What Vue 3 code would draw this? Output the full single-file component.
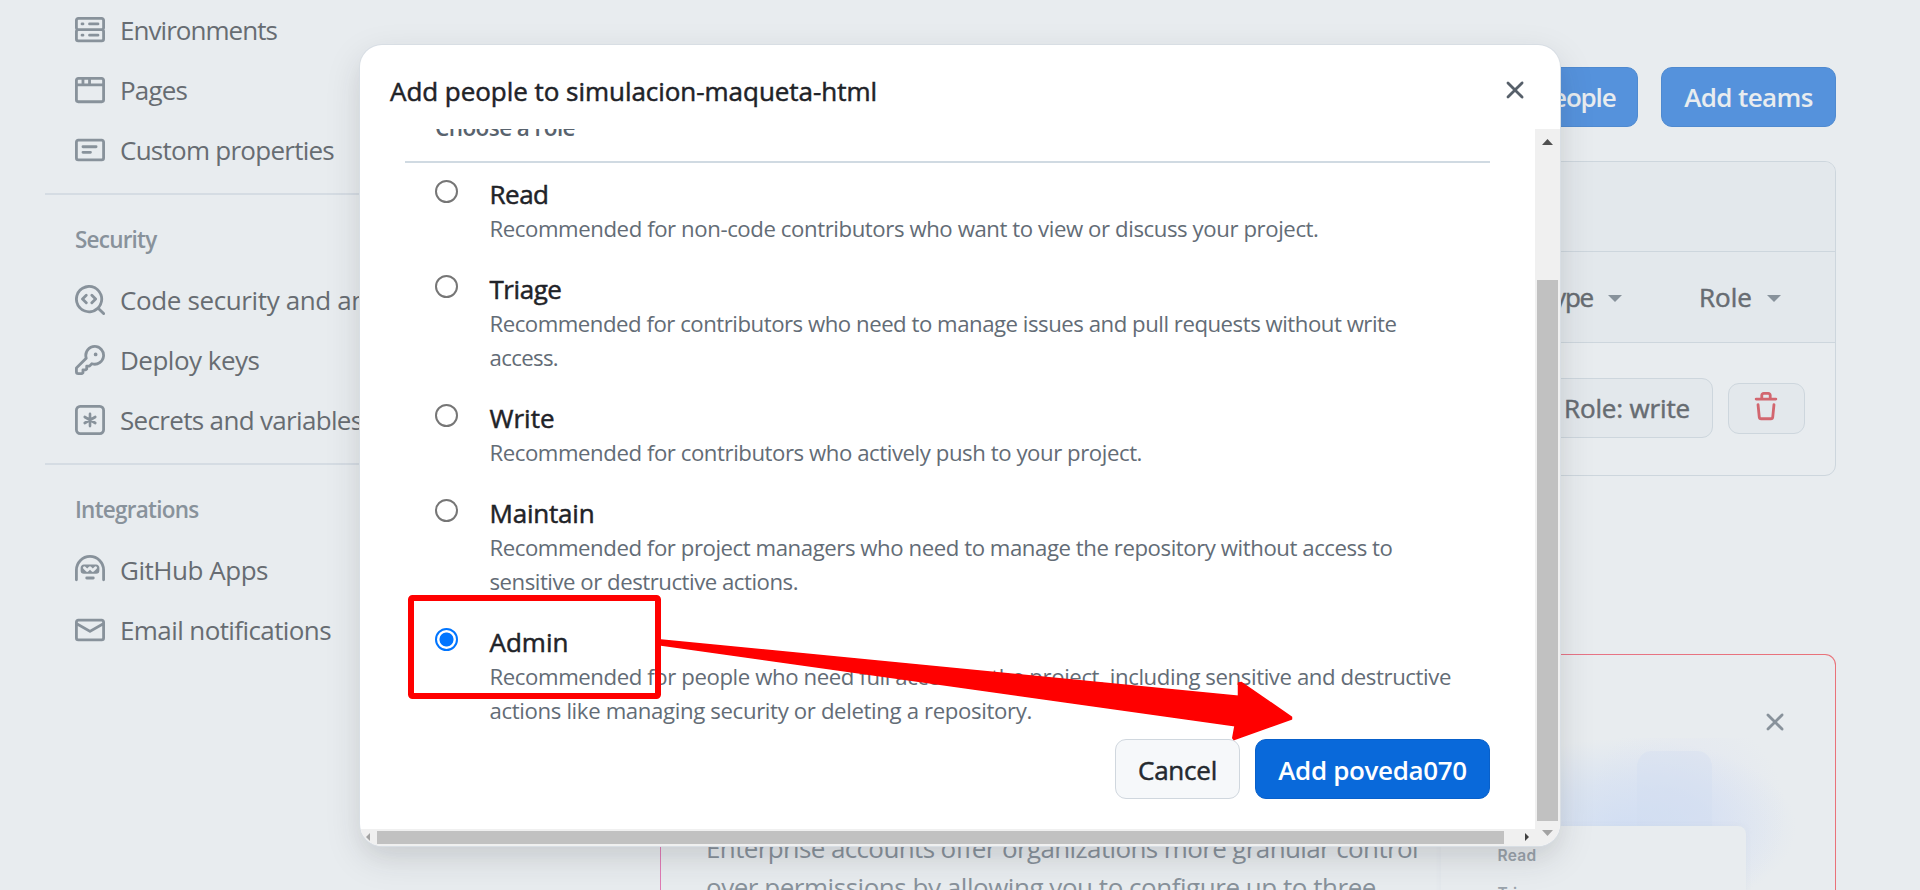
<script setup>
const icons = {
  server: 'M1.75 1h12.5c.966 0 1.75.784 1.75 1.75v4c0 .372-.116.717-.314 1 .198.283.314.628.314 1v4a1.75 1.75 0 0 1-1.75 1.75H1.75A1.75 1.75 0 0 1 0 12.75v-4c0-.358.109-.707.314-1a1.739 1.739 0 0 1-.314-1v-4C0 1.784.784 1 1.75 1ZM1.5 2.75v4c0 .138.112.25.25.25h12.5a.25.25 0 0 0 .25-.25v-4a.25.25 0 0 0-.25-.25H1.75a.25.25 0 0 0-.25.25Zm.25 5.75a.25.25 0 0 0-.25.25v4c0 .138.112.25.25.25h12.5a.25.25 0 0 0 .25-.25v-4a.25.25 0 0 0-.25-.25ZM7 4.75A.75.75 0 0 1 7.75 4h4.5a.75.75 0 0 1 0 1.5h-4.5A.75.75 0 0 1 7 4.75ZM7.75 10h4.5a.75.75 0 0 1 0 1.5h-4.5a.75.75 0 0 1 0-1.5ZM3 4.75A.75.75 0 0 1 3.75 4h.5a.75.75 0 0 1 0 1.5h-.5A.75.75 0 0 1 3 4.75ZM3.75 10h.5a.75.75 0 0 1 0 1.5h-.5a.75.75 0 0 1 0-1.5Z',
  browser: 'M0 2.75C0 1.784.784 1 1.75 1h12.5c.966 0 1.75.784 1.75 1.75v10.5A1.75 1.75 0 0 1 14.25 15H1.75A1.75 1.75 0 0 1 0 13.25ZM14.5 6h-13v7.25c0 .138.112.25.25.25h12.5a.25.25 0 0 0 .25-.25Zm-6-3.5v2h6V2.75a.25.25 0 0 0-.25-.25ZM5 2.5v2h2v-2Zm-3.25 0a.25.25 0 0 0-.25.25V4.5h2v-2Z',
  note: 'M0 3.75C0 2.784.784 2 1.75 2h12.5c.966 0 1.75.784 1.75 1.75v8.5A1.75 1.75 0 0 1 14.25 14H1.75A1.75 1.75 0 0 1 0 12.25Zm1.75-.25a.25.25 0 0 0-.25.25v8.5c0 .138.112.25.25.25h12.5a.25.25 0 0 0 .25-.25v-8.5a.25.25 0 0 0-.25-.25ZM3.5 6.25a.75.75 0 0 1 .75-.75h7a.75.75 0 0 1 0 1.5h-7a.75.75 0 0 1-.75-.75Zm.75 2.25h4a.75.75 0 0 1 0 1.5h-4a.75.75 0 0 1 0-1.5Z',
  codescan: 'M8.47 4.97a.75.75 0 0 0 0 1.06L9.94 7.5 8.47 8.97a.75.75 0 1 0 1.06 1.06l2-2a.75.75 0 0 0 0-1.06l-2-2a.75.75 0 0 0-1.06 0ZM6.53 6.03a.75.75 0 0 0-1.06-1.06l-2 2a.75.75 0 0 0 0 1.06l2 2a.75.75 0 1 0 1.06-1.06L5.06 7.5l1.47-1.47ZM12.246 13.307a7.501 7.501 0 1 1 1.06-1.06l2.474 2.473a.749.749 0 0 1-.326 1.275.749.749 0 0 1-.734-.215ZM1.5 7.5a6.002 6.002 0 0 0 3.608 5.504 6.002 6.002 0 0 0 6.486-1.117.748.748 0 0 1 .292-.293A6 6 0 1 0 1.5 7.5Z',
  key: 'M10.5 0a5.499 5.499 0 1 1-1.288 10.848l-.932.932a.749.749 0 0 1-.53.22H7v.75a.749.749 0 0 1-.22.53l-.5.5a.749.749 0 0 1-.53.22H5v.75a.749.749 0 0 1-.22.53l-.5.5a.749.749 0 0 1-.53.22h-2A1.75 1.75 0 0 1 0 14.25v-2c0-.199.079-.389.22-.53l4.932-4.932A5.5 5.5 0 0 1 10.5 0Zm-4 5.5c-.001.431.069.86.205 1.269a.75.75 0 0 1-.181.768L1.5 12.56v1.69c0 .138.112.25.25.25h1.69l.06-.06v-1.19a.75.75 0 0 1 .75-.75h1.19l.06-.06v-1.19a.75.75 0 0 1 .75-.75h1.19l1.023-1.025a.75.75 0 0 1 .768-.18A4 4 0 1 0 6.5 5.5ZM11 6a1 1 0 1 1 0-2 1 1 0 0 1 0 2Z',
  square: 'M0 2.75A2.75 2.75 0 0 1 2.75 0h10.5A2.75 2.75 0 0 1 16 2.75v10.5A2.75 2.75 0 0 1 13.25 16H2.75A2.75 2.75 0 0 1 0 13.25ZM2.75 1.5c-.69 0-1.25.56-1.25 1.25v10.5c0 .69.56 1.25 1.25 1.25h10.5c.69 0 1.25-.56 1.25-1.25V2.75c0-.69-.56-1.25-1.25-1.25Z',
  hubot: 'M0 8a8 8 0 1 1 16 0v5.25a.75.75 0 0 1-1.5 0V8a6.5 6.5 0 1 0-13 0v5.25a.75.75 0 0 1-1.5 0Zm5.5 4.25a.75.75 0 0 1 .75-.75h3.5a.75.75 0 0 1 0 1.5h-3.5a.75.75 0 0 1-.75-.75ZM3 6.75C3 5.784 3.784 5 4.75 5h6.5c.966 0 1.75.784 1.75 1.75v1.5A1.75 1.75 0 0 1 11.25 10h-6.5A1.75 1.75 0 0 1 3 8.25Zm1.47-.53a.75.75 0 0 0 0 1.06l1.5 1.5a.75.75 0 0 0 1.06 0L8 7.81l.97.97a.75.75 0 0 0 1.06 0l1.5-1.5a.75.75 0 0 0-1.06-1.06l-.97.97-.97-.97a.75.75 0 0 0-1.06 0l-.97.97-.97-.97a.75.75 0 0 0-1.06 0Z',
  mail: 'M1.75 2h12.5c.966 0 1.75.784 1.75 1.75v8.5A1.75 1.75 0 0 1 14.25 14H1.75A1.75 1.75 0 0 1 0 12.25v-8.5C0 2.784.784 2 1.75 2ZM1.5 12.251c0 .138.112.25.25.25h12.5a.25.25 0 0 0 .25-.25V5.809L8.38 9.397a.75.75 0 0 1-.76 0L1.5 5.809v6.442Zm13-8.181v-.32a.25.25 0 0 0-.25-.25H1.75a.25.25 0 0 0-.25.25v.32L8 7.88Z',
  x: 'M3.72 3.72a.75.75 0 0 1 1.06 0L8 6.94l3.22-3.22a.749.749 0 0 1 1.275.326.749.749 0 0 1-.215.734L9.06 8l3.22 3.22a.749.749 0 0 1-.326 1.275.749.749 0 0 1-.734-.215L8 9.06l-3.22 3.22a.751.751 0 0 1-1.042-.018.751.751 0 0 1-.018-1.042L6.94 8 3.72 4.78a.75.75 0 0 1 0-1.06Z',
  trash: 'M11 1.75V3h2.25a.75.75 0 0 1 0 1.5H2.75a.75.75 0 0 1 0-1.5H5V1.75C5 .784 5.784 0 6.75 0h2.5C10.216 0 11 .784 11 1.75ZM4.496 6.675l.66 6.6a.25.25 0 0 0 .249.225h5.19a.25.25 0 0 0 .249-.225l.66-6.6a.75.75 0 0 1 1.492.149l-.66 6.6A1.748 1.748 0 0 1 10.595 15h-5.19a1.75 1.75 0 0 1-1.741-1.575l-.66-6.6a.75.75 0 1 1 1.492-.15ZM6.5 1.75V3h3V1.75a.25.25 0 0 0-.25-.25h-2.5a.25.25 0 0 0-.25.25Z',
}

// w is the advance width of each label, in pixels
const groups = [
  {
    items: [
      { icon: 'server', text: 'Environments', w: 157 },
      { icon: 'browser', text: 'Pages', w: 67 },
      { icon: 'note', text: 'Custom properties', w: 214 },
    ],
  },
  {
    title: 'Security', w: 81.5,
    items: [
      { icon: 'codescan', text: 'Code security and analysis', w: 310 },
      { icon: 'key', text: 'Deploy keys', w: 139.5 },
      { icon: 'square', text: 'Secrets and variables', w: 242.5 },
    ],
  },
  {
    title: 'Integrations', w: 123.5,
    items: [
      { icon: 'hubot', text: 'GitHub Apps', w: 148 },
      { icon: 'mail', text: 'Email notifications', w: 211 },
    ],
  },
]

const roles = [
  { name: 'Read', w: 59, lines: [['Recommended for non-code contributors who want to view or discuss your project.', 829]] },
  {
    name: 'Triage', w: 72,
    lines: [['Recommended for contributors who need to manage issues and pull requests without write', 907], ['access.', 68.5]],
  },
  { name: 'Write', w: 65, lines: [['Recommended for contributors who actively push to your project.', 652.5]] },
  {
    name: 'Maintain', w: 105,
    lines: [['Recommended for project managers who need to manage the repository without access to', 903], ['sensitive or destructive actions.', 308.5]],
  },
  {
    name: 'Admin', w: 79, checked: true,
    lines: [['Recommended for people who need full access to the project, including sensitive and destructive', 961.5], ['actions like managing security or deleting a repository.', 542.5]],
  },
]

// Spreads the tracking of a label so that it takes the given width
const vFit = {
  mounted(el, { value }) {
    const natural = el.getBoundingClientRect().width
    el.style.letterSpacing = (value - natural) / el.textContent.length + 'px'
  },
}
</script>

<template>
  <div class="page">
    <nav class="sidebar">
      <section v-for="(g, i) in groups" :key="i" class="group">
        <h3 v-if="g.title" class="group-title"><span v-fit="g.w" class="t">{{ g.title }}</span></h3>
        <a v-for="it in g.items" :key="it.text" class="nav-item">
          <svg class="icon" viewBox="0 0 16 16">
            <path :d="icons[it.icon]" fill-rule="evenodd" />
            <path v-if="it.icon === 'square'" class="asterisk" d="M8 4.75v6.5M5.2 6.4l5.6 3.2M5.2 9.6l5.6-3.2" />
          </svg>
          <span v-fit="it.w" class="t">{{ it.text }}</span>
        </a>
      </section>
    </nav>

    <main class="main">
      <div class="actions">
        <button class="dim-primary"><span v-fit="130" class="t">Add people</span></button>
        <button class="dim-primary"><span v-fit="128.5" class="t">Add teams</span></button>
      </div>

      <div class="table">
        <div class="table-head"></div>
        <div class="table-cols">
          <span class="col"><span v-fit="53" class="t">Type</span><i class="caret"></i></span>
          <span class="col"><span v-fit="53" class="t">Role</span><i class="caret"></i></span>
        </div>
        <div class="table-row">
          <button class="role-btn"><span v-fit="126" class="t">Role: write</span></button>
          <button class="trash-btn"><svg class="icon" viewBox="0 0 16 16"><path :d="icons.trash" fill-rule="evenodd" /></svg></button>
        </div>
      </div>

      <div class="promo">
        <p class="promo-text">
          <span v-fit="712" class="t">Enterprise accounts offer organizations more granular control</span><br>
          <span v-fit="670" class="t">over permissions by allowing you to configure up to three</span>
        </p>
        <div class="promo-side">
          <svg class="icon promo-close" viewBox="0 0 16 16"><path :d="icons.x" /></svg>
          <div class="art">
            <div class="tile"></div>
            <div class="sheet">
              <span v-fit="39" class="t">Read</span>
              <span v-fit="47" class="t">Triage</span>
            </div>
          </div>
        </div>
      </div>
    </main>

    <div class="modal">
      <header class="modal-head">
        <h2 class="modal-title"><span v-fit="487" class="t">Add people to simulacion-maqueta-html</span></h2>
        <svg class="icon" viewBox="0 0 16 16"><path :d="icons.x" /></svg>
      </header>
      <div class="modal-scroll">
        <div class="modal-body">
          <div class="choose"><span v-fit="140" class="t">Choose a role</span></div>
          <label v-for="r in roles" :key="r.name" class="role">
            <span class="radio" :class="{ on: r.checked }"></span>
            <span class="role-text">
              <span class="role-name"><span v-fit="r.w" class="t">{{ r.name }}</span></span>
              <span v-for="l in r.lines" :key="l[0]" class="role-desc"><span v-fit="l[1]" class="t">{{ l[0] }}</span></span>
            </span>
          </label>
          <div class="footer">
            <button class="cancel"><span v-fit="79" class="t">Cancel</span></button>
            <button class="primary"><span v-fit="188.5" class="t">Add poveda070</span></button>
          </div>
        </div>
        <div class="vbar">
          <svg class="arrow" viewBox="0 0 11 6"><path d="M0 6h11L5.5 0z" fill="#505050" /></svg>
          <div class="vthumb"></div>
          <svg class="arrow" viewBox="0 0 11 6"><path d="M0 0h11L5.5 6z" fill="#a3a3a3" /></svg>
        </div>
      </div>
      <div class="hbar">
        <svg class="arrow-h" viewBox="0 0 4 8"><path d="M4 0v8L0 4z" fill="#a3a3a3" /></svg>
        <div class="hthumb"></div>
        <svg class="arrow-h" viewBox="0 0 4 8"><path d="M0 0v8l4-4z" fill="#404040" /></svg>
      </div>
    </div>

    <svg class="annotation" viewBox="0 0 1920 890">
      <rect x="411" y="598" width="247" height="98" rx="1.5" fill="none" stroke="#f00" stroke-width="6" />
      <path d="M656 640.7 661 640 1238.5 696.2V683L1241.5 682.5 1291.5 717.2V719L1234 739.5 1232.8 738 1235 725.8 661 645Z" fill="#f00" stroke="#f00" stroke-width="1.5" stroke-linejoin="round" />
    </svg>
  </div>
</template>

<style>
html,
body {
  margin: 0;
  overflow: hidden;
  background: #e8ecef;
}
</style>

<style scoped>
.page {
  position: relative;
  width: 1920px;
  height: 890px;
  overflow: hidden;
  display: flex;
  background: #e8ecef;
  font-family: "Open Sans", "Noto Sans", sans-serif;
  font-size: 26px;
  color: #676c72;
}
.t { display: inline-block; white-space: nowrap; }
.icon { width: 30px; height: 30px; flex: none; fill: #88929b; display: block; }
.asterisk { fill: none; stroke: #88929b; stroke-width: 1.4; stroke-linecap: round; }
button { font: inherit; padding: 0; box-sizing: border-box; display: flex; align-items: center; justify-content: center; }
h2, h3, p { margin: 0; font: inherit; }

.sidebar { width: 555px; margin-left: 45px; flex: none; }
.group + .group { margin-top: 13px; border-top: 2px solid #d5dce3; padding-top: 15px; }
.group-title { height: 60px; line-height: 60px; padding-left: 30px; font-size: 22.5px; font-weight: 600; color: #88929b; }
.nav-item { display: flex; align-items: center; height: 60px; padding-left: 30px; gap: 15px; }

.main { width: 1176px; margin-left: 60px; padding-top: 67px; flex: none; }
.actions { display: flex; justify-content: flex-end; gap: 23px; }
.dim-primary { height: 60px; width: 175px; border: 1px solid #4f8ad0; border-radius: 11px; background: #5592dc; color: #e8ecef; font-weight: 600; }
.table { margin-top: 34px; border: 1px solid #cdd6dd; border-radius: 11px; height: 315px; box-sizing: border-box; overflow: hidden; display: flex; flex-direction: column; }
.table-head { height: 89px; background: #e3e8ec; border-bottom: 1px solid #cdd6dd; }
.table-cols { height: 90px; background: #e3e8ec; border-bottom: 1px solid #cdd6dd; display: flex; justify-content: flex-end; align-items: center; gap: 77px; padding-right: 54px; -webkit-text-stroke: .5px; }
.col { display: flex; align-items: center; gap: 15px; }
.caret { border: 7px solid transparent; border-top-color: #88929b; border-bottom: 0; margin-top: 3px; }
.table-row { flex: 1; display: flex; justify-content: flex-end; align-items: center; gap: 15px; padding: 0 30px 2px 0; -webkit-text-stroke: .5px; }
.role-btn { width: 190px; height: 60px; justify-content: flex-end; padding-right: 22px; border: 1px solid #cdd6dd; border-radius: 11px; background: #e3e8ec; color: #676c72; }
.trash-btn { width: 77px; height: 51px; border: 1px solid #cdd6dd; border-radius: 11px; background: #e3e8ec; }
.trash-btn .icon { fill: #d2666f; margin: -2px 1px 0 0; }

.promo { margin-top: 178px; height: 300px; box-sizing: border-box; border: 1px solid transparent; border-radius: 11px; background: linear-gradient(#e8ecef, #e8ecef) padding-box, linear-gradient(90deg, #df7ab4, #e97279) border-box; display: flex; padding-left: 45px; }
.promo-text { padding-top: 174px; line-height: 39.4px; width: 735px; flex: none; color: #88929b; height: 120px; }
.promo-side { width: 354px; flex: none; display: flex; flex-direction: column; }
.promo-close { align-self: flex-end; margin: 52px 5px 0 0; }
.art { margin-top: 1px; height: 160px; display: flex; flex-direction: column; background: radial-gradient(ellipse 170px 90px at 185px 90px, rgba(206, 220, 243, .85), rgba(206, 220, 243, .5) 50%, rgba(206, 220, 243, 0)), radial-gradient(ellipse 100px 100px at 245px 75px, rgba(222, 227, 243, .7), rgba(222, 227, 243, 0)); }
.tile { width: 75px; height: 75px; margin: 13px 0 0 196px; border-radius: 15px 15px 0 0; background: rgba(210, 222, 240, .35); flex: none; }
.sheet { flex: 1; width: 305px; background: #e8ecef; border-radius: 0 8px 0 0; box-shadow: 0 0 6px rgba(180, 190, 210, .15); font: 600 15.5px/38px Inter, sans-serif; color: #9aa3ab; display: flex; flex-direction: column; align-items: flex-start; padding: 11px 0 0 56.5px; box-sizing: border-box; }

.modal { position: absolute; left: 360px; top: 45px; width: 1200px; height: 800.5px; border-radius: 22px; overflow: hidden; background: #fff; display: flex; flex-direction: column; color: #1f2328; box-shadow: 0 0 0 1px #d8dee4, 0 12px 24px -5px rgba(37, 41, 46, .05), 0 12px 36px rgba(37, 41, 46, .13); }
.modal-head { height: 84px; flex: none; display: flex; justify-content: space-between; align-items: center; padding: 0 30px; box-sizing: border-box; }
.modal-head .icon { fill: #57606a; margin-top: 6px; }
.modal-title { -webkit-text-stroke: .5px; line-height: 40px; margin-top: 8px; }
.modal-scroll { height: 700px; flex: none; display: flex; clip-path: inset(0 0 -17px 0); }
.modal-body { width: 1175px; padding: 0 45px; box-sizing: border-box; flex: none; }
.choose { margin-top: -18.3px; height: 33.75px; line-height: 33.75px; padding: 0 0 16.5px 30px; border-bottom: 2px solid #d0dae2; margin-bottom: 13.5px; font-size: 22.5px; font-weight: 600; color: #59636e; }
.role { display: flex; padding-left: 29.5px; margin-bottom: 25.25px; }
.radio { width: 23px; height: 23px; flex: none; margin: 3.6px 32px 0 0; box-sizing: border-box; border: 2px solid #767676; border-radius: 50%; }
.radio.on { border-color: #0075ff; background: radial-gradient(circle, #0075ff 6.6px, transparent 7.4px); }
.role-text { display: flex; flex-direction: column; }
.role-name { height: 36px; line-height: 36px; -webkit-text-stroke: .5px; }
.role-desc { height: 33.75px; line-height: 33.75px; font-size: 22.2px; color: #636c76; }
.footer { display: flex; justify-content: flex-end; gap: 15px; margin-top: -13.75px; }
.footer .t { padding-top: 1.5px; }
.cancel { width: 125px; height: 60px; border: 1px solid #d0d7de; border-radius: 11px; background: #f6f8fa; color: #24292f; -webkit-text-stroke: .5px; }
.primary { width: 235px; height: 60px; border: 1px solid #0860ca; border-radius: 11px; background: #0969da; color: #fff; font-weight: 600; }
.vbar { width: 25px; height: 717px; flex: none; background: #f0f0f0; display: flex; flex-direction: column; align-items: center; }
.arrow { width: 11px; height: 6px; margin-top: 10px; flex: none; display: block; }
.vthumb { width: 21px; height: 541px; background: #c1c1c1; margin-top: 135px; flex: none; }
.vthumb + .arrow { margin-top: 9px; }
.hbar { flex: 1; width: 1175px; background: #f0f0f0; display: flex; align-items: center; }
.arrow-h { width: 4px; height: 8px; margin-left: 6px; flex: none; }
.hthumb { width: 1127px; height: 13px; background: #c1c1c1; margin-left: 7px; flex: none; }
.hthumb + .arrow-h { margin-left: 21px; }

.annotation { position: absolute; left: 0; top: 0; width: 1920px; height: 890px; pointer-events: none; }
</style>
